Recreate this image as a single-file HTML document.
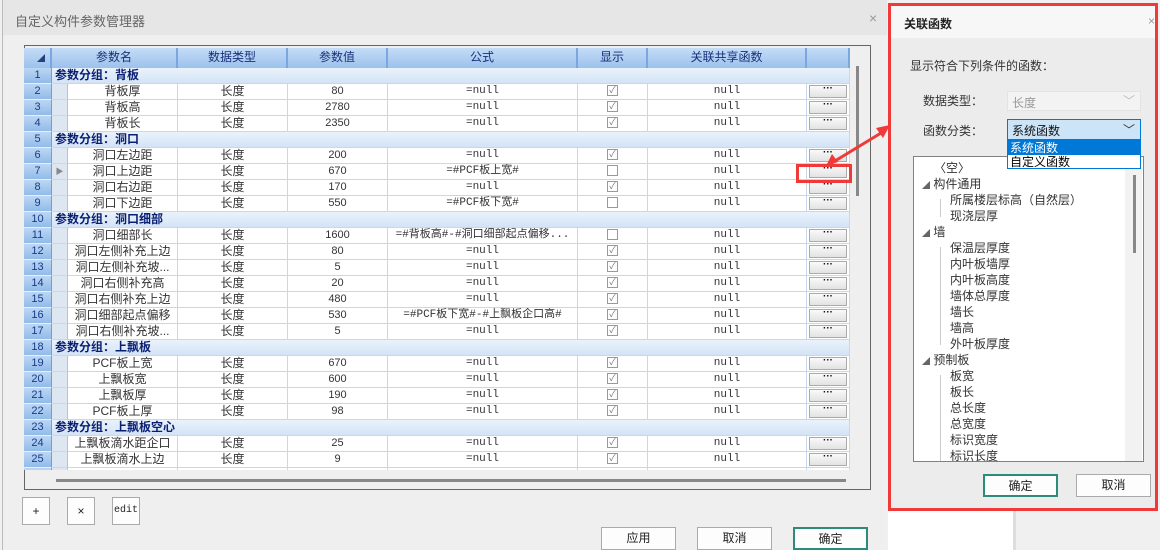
<!DOCTYPE html>
<html><head><meta charset="utf-8"><style>
*{margin:0;padding:0;box-sizing:border-box}
body{width:1160px;height:550px;overflow:hidden;background:#f0f0f0;font-family:"Liberation Sans","Noto Sans CJK SC",sans-serif;font-size:12px;color:#333;position:relative}
.abs{position:absolute}
#main{left:2px;top:0;width:884px;height:550px;background:#efefef;border-left:1px solid #bbb}
#mt{left:0;top:0;width:884px;height:35px;background:#e6e6e6;color:#666;font-size:13px;padding:11px 0 0 12px}
#frame{left:21px;top:45px;width:847px;height:445px;border:1px solid #666;background:#efefef}
.row{position:absolute;left:24px;width:826px;height:16px;display:flex;font-size:12px;line-height:15px}
.row>div{border-right:1px solid #c8d8ec;border-bottom:1px solid #c8d8ec;text-align:center;background:#fff;white-space:nowrap;overflow:hidden;height:16px}
.c0{width:28px;background:linear-gradient(#bcd6f3,#92bbe9)!important;color:#1a3a8c;border-right:1px solid #6f9fdc!important;border-bottom:1px solid #e6eef8!important;font-size:11px}
.c1{width:16px;background:#dde6f1!important;border-right:1px solid #a9c4e8!important}
.c2{width:110px}.c3{width:110px}.c4{width:100px;font-size:11px}.c5{width:190px;font-family:"Liberation Mono","Noto Sans CJK SC",monospace;font-size:11px}.c6{width:70px}.c7{width:159px;font-family:"Liberation Mono",monospace;font-size:11px}.c8{width:43px;position:relative}
.grp>div.g{flex:1;background:linear-gradient(#eaf2fb,#d3e4f6);color:#0a1f73;font-weight:bold;text-align:left;padding-left:3px;font-size:12px}
.hd{position:absolute;left:24px;top:48px;height:20px;width:826px;display:flex;font-size:12px;line-height:19px;color:#1a2f7a}
.hd>div{background:linear-gradient(#c4dcf6,#9cc2ec);border-right:2px solid #7aa7e0;text-align:center}
.cb{display:inline-block;width:11px;height:11px;border:1px solid #999;vertical-align:middle;margin-top:-2px;font-size:9px;line-height:9px;color:#777;background:#fff}
.btn{position:absolute;left:2px;top:1px;width:38px;height:13px;background:linear-gradient(#fafafa,#e2e2e2);border:1px solid #aaa;font-size:10px;line-height:6px;font-weight:bold;color:#111;text-align:center}
.pb{position:absolute;background:#fdfdfd;border:1px solid #aaa;text-align:center;font-size:12px;line-height:21px;color:#222}
#dlg{left:888px;top:3px;width:270px;height:508px;border:3px solid #f03a3a;background:#ececec}
.tr{position:absolute;left:0;font-size:12px;color:#333;white-space:nowrap}
</style></head><body>
<div class="abs" id="main">
 <div class="abs" id="mt">自定义构件参数管理器</div>
 <div class="abs" style="left:866px;top:10px;color:#999;font-size:14px">×</div>
 <div class="abs" id="frame"></div>
</div>

<div class="hd"><div style="width:28px;position:relative"><span style="position:absolute;right:5px;top:6px;width:0;height:0;border-left:8px solid transparent;border-bottom:8px solid #24407f"></span></div><div style="width:126px">参数名</div><div style="width:110px">数据类型</div><div style="width:100px">参数值</div><div style="width:190px">公式</div><div style="width:70px">显示</div><div style="width:159px">关联共享函数</div><div style="width:43px"></div></div>

<div class="row grp" style="top:68px"><div class="c0">1</div><div class="g">参数分组：背板</div></div>
<div class="row" style="top:84px"><div class="c0">2</div><div class="c1"></div><div class="c2">背板厚</div><div class="c3">长度</div><div class="c4">80</div><div class="c5">=null</div><div class="c6"><span class="cb">✓</span></div><div class="c7">null</div><div class="c8"><span class="btn">···</span></div></div>
<div class="row" style="top:100px"><div class="c0">3</div><div class="c1"></div><div class="c2">背板高</div><div class="c3">长度</div><div class="c4">2780</div><div class="c5">=null</div><div class="c6"><span class="cb">✓</span></div><div class="c7">null</div><div class="c8"><span class="btn">···</span></div></div>
<div class="row" style="top:116px"><div class="c0">4</div><div class="c1"></div><div class="c2">背板长</div><div class="c3">长度</div><div class="c4">2350</div><div class="c5">=null</div><div class="c6"><span class="cb">✓</span></div><div class="c7">null</div><div class="c8"><span class="btn">···</span></div></div>
<div class="row grp" style="top:132px"><div class="c0">5</div><div class="g">参数分组：洞口</div></div>
<div class="row" style="top:148px"><div class="c0">6</div><div class="c1"></div><div class="c2">洞口左边距</div><div class="c3">长度</div><div class="c4">200</div><div class="c5">=null</div><div class="c6"><span class="cb">✓</span></div><div class="c7">null</div><div class="c8"><span class="btn">···</span></div></div>
<div class="row" style="top:164px"><div class="c0">7</div><div class="c1" style="color:#888;font-size:8px">▶</div><div class="c2">洞口上边距</div><div class="c3">长度</div><div class="c4">670</div><div class="c5">=#PCF板上宽#</div><div class="c6"><span class="cb"></span></div><div class="c7">null</div><div class="c8"><span class="btn">···</span></div></div>
<div class="row" style="top:180px"><div class="c0">8</div><div class="c1"></div><div class="c2">洞口右边距</div><div class="c3">长度</div><div class="c4">170</div><div class="c5">=null</div><div class="c6"><span class="cb">✓</span></div><div class="c7">null</div><div class="c8"><span class="btn">···</span></div></div>
<div class="row" style="top:196px"><div class="c0">9</div><div class="c1"></div><div class="c2">洞口下边距</div><div class="c3">长度</div><div class="c4">550</div><div class="c5">=#PCF板下宽#</div><div class="c6"><span class="cb"></span></div><div class="c7">null</div><div class="c8"><span class="btn">···</span></div></div>
<div class="row grp" style="top:212px"><div class="c0">10</div><div class="g">参数分组：洞口细部</div></div>
<div class="row" style="top:228px"><div class="c0">11</div><div class="c1"></div><div class="c2">洞口细部长</div><div class="c3">长度</div><div class="c4">1600</div><div class="c5">=#背板高#-#洞口细部起点偏移...</div><div class="c6"><span class="cb"></span></div><div class="c7">null</div><div class="c8"><span class="btn">···</span></div></div>
<div class="row" style="top:244px"><div class="c0">12</div><div class="c1"></div><div class="c2">洞口左侧补充上边</div><div class="c3">长度</div><div class="c4">80</div><div class="c5">=null</div><div class="c6"><span class="cb">✓</span></div><div class="c7">null</div><div class="c8"><span class="btn">···</span></div></div>
<div class="row" style="top:260px"><div class="c0">13</div><div class="c1"></div><div class="c2">洞口左侧补充坡...</div><div class="c3">长度</div><div class="c4">5</div><div class="c5">=null</div><div class="c6"><span class="cb">✓</span></div><div class="c7">null</div><div class="c8"><span class="btn">···</span></div></div>
<div class="row" style="top:276px"><div class="c0">14</div><div class="c1"></div><div class="c2">洞口右侧补充高</div><div class="c3">长度</div><div class="c4">20</div><div class="c5">=null</div><div class="c6"><span class="cb">✓</span></div><div class="c7">null</div><div class="c8"><span class="btn">···</span></div></div>
<div class="row" style="top:292px"><div class="c0">15</div><div class="c1"></div><div class="c2">洞口右侧补充上边</div><div class="c3">长度</div><div class="c4">480</div><div class="c5">=null</div><div class="c6"><span class="cb">✓</span></div><div class="c7">null</div><div class="c8"><span class="btn">···</span></div></div>
<div class="row" style="top:308px"><div class="c0">16</div><div class="c1"></div><div class="c2">洞口细部起点偏移</div><div class="c3">长度</div><div class="c4">530</div><div class="c5">=#PCF板下宽#-#上飘板企口高#</div><div class="c6"><span class="cb">✓</span></div><div class="c7">null</div><div class="c8"><span class="btn">···</span></div></div>
<div class="row" style="top:324px"><div class="c0">17</div><div class="c1"></div><div class="c2">洞口右侧补充坡...</div><div class="c3">长度</div><div class="c4">5</div><div class="c5">=null</div><div class="c6"><span class="cb">✓</span></div><div class="c7">null</div><div class="c8"><span class="btn">···</span></div></div>
<div class="row grp" style="top:340px"><div class="c0">18</div><div class="g">参数分组：上飘板</div></div>
<div class="row" style="top:356px"><div class="c0">19</div><div class="c1"></div><div class="c2">PCF板上宽</div><div class="c3">长度</div><div class="c4">670</div><div class="c5">=null</div><div class="c6"><span class="cb">✓</span></div><div class="c7">null</div><div class="c8"><span class="btn">···</span></div></div>
<div class="row" style="top:372px"><div class="c0">20</div><div class="c1"></div><div class="c2">上飘板宽</div><div class="c3">长度</div><div class="c4">600</div><div class="c5">=null</div><div class="c6"><span class="cb">✓</span></div><div class="c7">null</div><div class="c8"><span class="btn">···</span></div></div>
<div class="row" style="top:388px"><div class="c0">21</div><div class="c1"></div><div class="c2">上飘板厚</div><div class="c3">长度</div><div class="c4">190</div><div class="c5">=null</div><div class="c6"><span class="cb">✓</span></div><div class="c7">null</div><div class="c8"><span class="btn">···</span></div></div>
<div class="row" style="top:404px"><div class="c0">22</div><div class="c1"></div><div class="c2">PCF板上厚</div><div class="c3">长度</div><div class="c4">98</div><div class="c5">=null</div><div class="c6"><span class="cb">✓</span></div><div class="c7">null</div><div class="c8"><span class="btn">···</span></div></div>
<div class="row grp" style="top:420px"><div class="c0">23</div><div class="g">参数分组：上飘板空心</div></div>
<div class="row" style="top:436px"><div class="c0">24</div><div class="c1"></div><div class="c2">上飘板滴水距企口</div><div class="c3">长度</div><div class="c4">25</div><div class="c5">=null</div><div class="c6"><span class="cb">✓</span></div><div class="c7">null</div><div class="c8"><span class="btn">···</span></div></div>
<div class="row" style="top:452px"><div class="c0">25</div><div class="c1"></div><div class="c2">上飘板滴水上边</div><div class="c3">长度</div><div class="c4">9</div><div class="c5">=null</div><div class="c6"><span class="cb">✓</span></div><div class="c7">null</div><div class="c8"><span class="btn">···</span></div></div>
<div class="row" style="top:468px;height:2px;overflow:hidden"><div class="c0"></div><div class="c1"></div><div class="c2"></div><div class="c3"></div><div class="c4"></div><div class="c5"></div><div class="c6"></div><div class="c7"></div><div class="c8"></div></div>

<div class="abs" style="left:856px;top:66px;width:3px;height:130px;background:#888"></div>
<div class="abs" style="left:56px;top:479px;width:790px;height:3px;background:#888"></div>
<div class="abs" style="left:796px;top:164px;width:56px;height:19px;border:3px solid #f03a3a"></div>
<svg class="abs" style="left:820px;top:120px" width="72" height="50"><line x1="10" y1="44" x2="66" y2="10" stroke="#f03a3a" stroke-width="3"/><polygon points="70,5 56,8 63,18" fill="#f03a3a"/><polygon points="6,46 18,42 12,34" fill="#f03a3a"/></svg>

<div class="pb" style="left:22px;top:497px;width:28px;height:28px;line-height:26px">+</div>
<div class="pb" style="left:67px;top:497px;width:28px;height:28px;line-height:26px">×</div>
<div class="pb" style="left:112px;top:497px;width:28px;height:28px;line-height:26px;font-family:'Liberation Mono',monospace;font-size:10px">edit</div>
<div class="pb" style="left:601px;top:527px;width:75px;height:23px">应用</div>
<div class="pb" style="left:697px;top:527px;width:75px;height:23px">取消</div>
<div class="pb" style="left:793px;top:527px;width:75px;height:23px;border:2px solid #2e8b7a">确定</div>

<div class="abs" style="left:888px;top:511px;width:128px;height:39px;background:#fff;border-right:3px solid #ddd"></div>

<div class="abs" id="dlg">
 <div class="abs" style="left:0;top:0;width:264px;height:32px;background:#f7f7f7;font-weight:bold;font-size:12px;padding:9px 0 0 13px;color:#222">关联函数</div>
 <div class="abs" style="left:257px;top:8px;color:#999">×</div>
 <div class="abs" style="left:19px;top:51px;font-size:12px">显示符合下列条件的函数：</div>
 <div class="abs" style="left:32px;top:86px">数据类型：</div>
 <div class="abs" style="left:116px;top:85px;width:134px;height:20px;background:#f3f3f3;border:1px solid #e3e3e3;color:#999;padding:2px 4px">长度<span style="position:absolute;right:5px;top:0;color:#bbb">﹀</span></div>
 <div class="abs" style="left:32px;top:116px">函数分类：</div>
 <div class="abs" style="left:116px;top:113px;width:134px;height:21px;background:#cce4f7;border:1px solid #0078d7;color:#111;padding:2px 4px">系统函数<span style="position:absolute;right:5px;top:1px;color:#333">﹀</span></div>
 <div class="abs" style="left:22px;top:150px;width:231px;height:306px;background:#fff;border:1px solid #828282">
  <div class="abs" style="left:211px;top:0;width:17px;height:304px;background:#f2f2f2"></div>
  <div class="abs" style="left:219px;top:18px;width:3px;height:78px;background:#888"></div>
  <div class="tr" style="left:20px;top:2px">〈空〉</div>
  <div class="tr" style="left:8px;top:18px"><span style="font-size:8px;color:#666">◢</span> 构件通用</div>
  <div class="tr" style="left:36px;top:34px">所属楼层标高（自然层）</div>
  <div class="tr" style="left:36px;top:50px">现浇层厚</div>
  <div class="tr" style="left:8px;top:66px"><span style="font-size:8px;color:#666">◢</span> 墙</div>
  <div class="tr" style="left:36px;top:82px">保温层厚度</div>
  <div class="tr" style="left:36px;top:98px">内叶板墙厚</div>
  <div class="tr" style="left:36px;top:114px">内叶板高度</div>
  <div class="tr" style="left:36px;top:130px">墙体总厚度</div>
  <div class="tr" style="left:36px;top:146px">墙长</div>
  <div class="tr" style="left:36px;top:162px">墙高</div>
  <div class="tr" style="left:36px;top:178px">外叶板厚度</div>
  <div class="tr" style="left:8px;top:194px"><span style="font-size:8px;color:#666">◢</span> 预制板</div>
  <div class="tr" style="left:36px;top:210px">板宽</div>
  <div class="tr" style="left:36px;top:226px">板长</div>
  <div class="tr" style="left:36px;top:242px">总长度</div>
  <div class="tr" style="left:36px;top:258px">总宽度</div>
  <div class="tr" style="left:36px;top:274px">标识宽度</div>
  <div class="tr" style="left:36px;top:290px">标识长度</div>
  <div class="abs" style="left:26px;top:42px;width:1px;height:18px;border-left:1px solid #ccc"></div>
  <div class="abs" style="left:26px;top:90px;width:1px;height:98px;border-left:1px solid #ccc"></div>
  <div class="abs" style="left:26px;top:218px;width:1px;height:86px;border-left:1px solid #ccc"></div>
 </div>
 <div class="abs" style="left:116px;top:134px;width:134px;height:29px;background:#fff;border:1px solid #0078d7;font-size:12px;line-height:14px">
  <div style="background:#0078d7;color:#fff;padding-left:2px">系统函数</div>
  <div style="color:#000;padding-left:2px">自定义函数</div>
 </div>
 <div class="pb" style="left:92px;top:468px;width:75px;height:23px;border:2px solid #2e8b7a">确定</div>
 <div class="pb" style="left:185px;top:468px;width:75px;height:23px">取消</div>
</div>
</body></html>
